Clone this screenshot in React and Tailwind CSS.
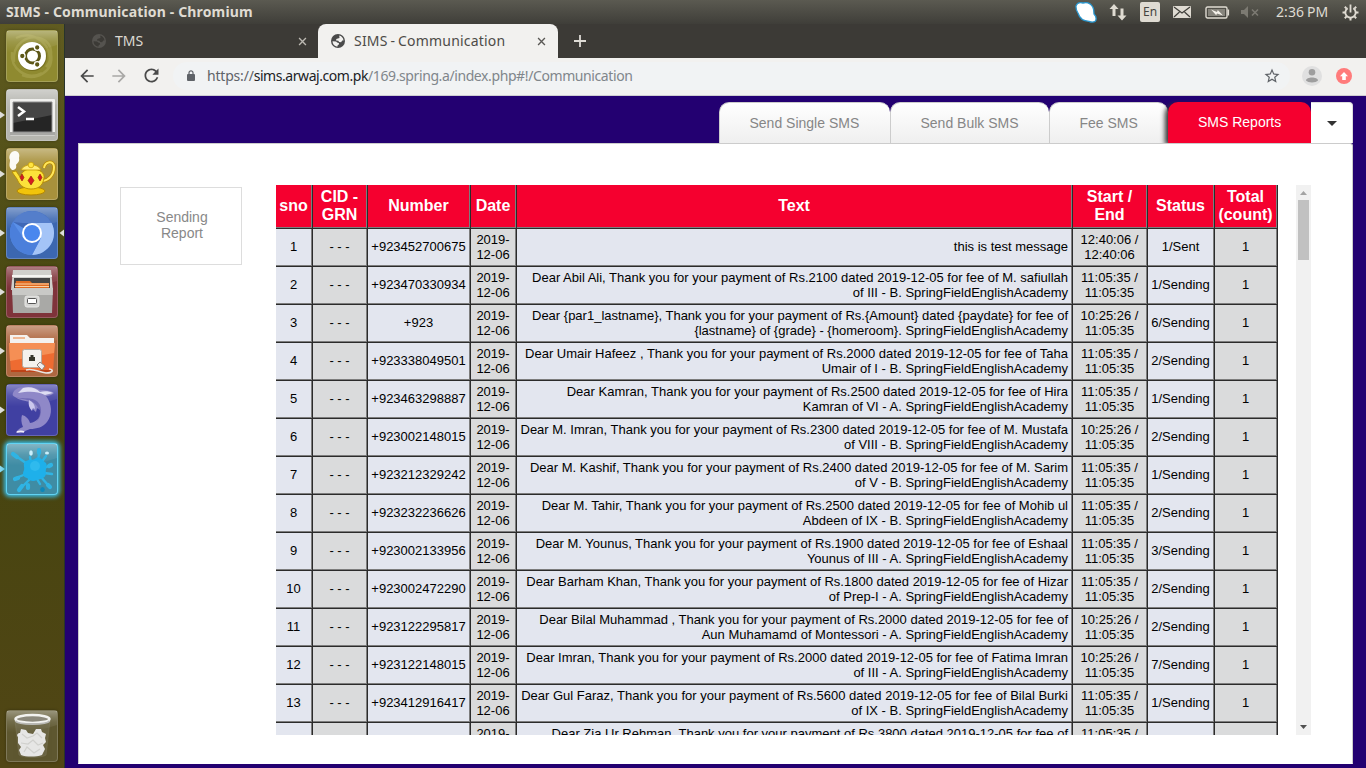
import React from "react";

const UI = "font-['Noto_Sans','Open_Sans',sans-serif]";

const rows = [
  ["1", "+923452700675", "this is test message", "", "12:40:06", "12:40:06", "1/Sent"],
  ["2", "+923470330934", "Dear Abil Ali, Thank you for your payment of Rs.2100 dated 2019-12-05 for fee of M. safiullah", "of III - B. SpringFieldEnglishAcademy", "11:05:35", "11:05:35", "1/Sending"],
  ["3", "+923", "Dear {par1_lastname}, Thank you for your payment of Rs.{Amount} dated {paydate} for fee of", "{lastname} of {grade} - {homeroom}. SpringFieldEnglishAcademy", "10:25:26", "11:05:35", "6/Sending"],
  ["4", "+923338049501", "Dear Umair Hafeez , Thank you for your payment of Rs.2000 dated 2019-12-05 for fee of Taha", "Umair of I - B. SpringFieldEnglishAcademy", "11:05:35", "11:05:35", "2/Sending"],
  ["5", "+923463298887", "Dear Kamran, Thank you for your payment of Rs.2500 dated 2019-12-05 for fee of Hira", "Kamran of VI - A. SpringFieldEnglishAcademy", "11:05:35", "11:05:35", "1/Sending"],
  ["6", "+923002148015", "Dear M. Imran, Thank you for your payment of Rs.2300 dated 2019-12-05 for fee of M. Mustafa", "of VIII - B. SpringFieldEnglishAcademy", "10:25:26", "11:05:35", "2/Sending"],
  ["7", "+923212329242", "Dear M. Kashif, Thank you for your payment of Rs.2400 dated 2019-12-05 for fee of M. Sarim", "of V - B. SpringFieldEnglishAcademy", "11:05:35", "11:05:35", "1/Sending"],
  ["8", "+923232236626", "Dear M. Tahir, Thank you for your payment of Rs.2500 dated 2019-12-05 for fee of Mohib ul", "Abdeen of IX - B. SpringFieldEnglishAcademy", "11:05:35", "11:05:35", "2/Sending"],
  ["9", "+923002133956", "Dear M. Younus, Thank you for your payment of Rs.1900 dated 2019-12-05 for fee of Eshaal", "Younus of III - A. SpringFieldEnglishAcademy", "11:05:35", "11:05:35", "3/Sending"],
  ["10", "+923002472290", "Dear Barham Khan, Thank you for your payment of Rs.1800 dated 2019-12-05 for fee of Hizar", "of Prep-I - A. SpringFieldEnglishAcademy", "11:05:35", "11:05:35", "2/Sending"],
  ["11", "+923122295817", "Dear Bilal Muhammad , Thank you for your payment of Rs.2000 dated 2019-12-05 for fee of", "Aun Muhamamd of Montessori - A. SpringFieldEnglishAcademy", "10:25:26", "11:05:35", "2/Sending"],
  ["12", "+923122148015", "Dear Imran, Thank you for your payment of Rs.2000 dated 2019-12-05 for fee of Fatima Imran", "of III - A. SpringFieldEnglishAcademy", "10:25:26", "11:05:35", "7/Sending"],
  ["13", "+923412916417", "Dear Gul Faraz, Thank you for your payment of Rs.5600 dated 2019-12-05 for fee of Bilal Burki", "of IX - B. SpringFieldEnglishAcademy", "11:05:35", "11:05:35", "1/Sending"],
];

const GRID = "grid grid-cols-[37px_55px_103px_46px_556px_75px_67px_63px]";
const CELL = "flex items-center justify-center border-r border-b border-[#2b2b2b] shadow-[inset_-1px_-1px_0_#7d7d7d] pr-px whitespace-nowrap";

function Cell({ alt, children, right, single }) {
  return (
    <div className={`${CELL} ${single ? "pb-[2px]" : "pb-px"} ${alt ? "bg-[#dadbdc]" : "bg-[#e3e6ef]"} ${right ? "justify-end! text-right pr-1!" : "text-center"}`}>
      <div>{children}</div>
    </div>
  );
}

function Head({ children }) {
  return <div className={`${CELL} bg-[#f5002f] pb-px text-center text-white`}><div>{children}</div></div>;
}

function Report() {
  return (
    <div className="h-[550px] w-[1002px] overflow-hidden text-[13px] leading-[15px] text-black">
      <div className={`${GRID} h-11 text-[16px] leading-[18px] font-bold`}>
        <Head>sno</Head>
        <Head>CID -<br />GRN</Head>
        <Head>Number</Head>
        <Head>Date</Head>
        <Head>Text</Head>
        <Head>Start /<br />End</Head>
        <Head>Status</Head>
        <Head>Total<br />(count)</Head>
      </div>
      {rows.map((r) => (
        <div key={r[0]} className={`${GRID} h-[38px]`}>
          <Cell single>{r[0]}</Cell>
          <Cell single alt>- - -</Cell>
          <Cell single>{r[1]}</Cell>
          <Cell alt>2019-<br />12-06</Cell>
          <Cell right single={!r[3]}>{r[2]}{r[3] && <br />}{r[3]}</Cell>
          <Cell alt>{r[4]} /<br />{r[5]}</Cell>
          <Cell single>{r[6]}</Cell>
          <Cell single alt>1</Cell>
        </div>
      ))}
      <div className={`${GRID} h-[38px]`}>
        <Cell />
        <Cell alt />
        <Cell />
        <Cell alt>2019-<br />&nbsp;</Cell>
        <Cell right>Dear Zia Ur Rehman, Thank you for your payment of Rs.3800 dated 2019-12-05 for fee of<br />&nbsp;</Cell>
        <Cell alt>11:05:35 /<br />&nbsp;</Cell>
        <Cell />
        <Cell alt />
      </div>
    </div>
  );
}

function Globe({ className }) {
  return (
    <svg viewBox="0 0 16 16" className={className} fill="currentColor">
      <path fillRule="evenodd" d="M8 1a7 7 0 1 0 0 14A7 7 0 0 0 8 1zM9.200 2.600c2.300.5 4.100 2.400 4.300 4.800l-1.300.1-1.100 1.700-2-.3-.8-1.200-2.200-.2.2-1.400 1.500-.7 1.700-.3zM2.500 8.200l3.600.2 1 1.200 1.700.4.3 1.300-1.400.9-.4 1.500C4.600 13.300 2.500 11 2.500 8.200z" />
    </svg>
  );
}

function Close({ className }) {
  return (
    <svg viewBox="0 0 10 10" className={className} stroke="currentColor" strokeWidth="1.5">
      <path d="M1.200 1.200l7.600 7.600M8.800 1.200L1.200 8.800" />
    </svg>
  );
}

function TopBar() {
  return (
    <div className={`flex h-6 w-full items-center bg-linear-to-b from-[#5b5a51] to-[#3f3e39] text-[#dfdbd2] ${UI}`}>
      <div className="ml-1.5 w-[1069px] shrink-0 text-[14px] leading-6 font-bold tracking-[0.15px] whitespace-nowrap">SIMS - Communication - Chromium</div>
      <svg className="h-[22px] w-[22px] shrink-0" viewBox="0 0 22 22">
        <path d="M1 5C2 2 5 1.200 8 2c4-1 8 .5 10 4.500 1 2.500.8 4.500 1 6.500 2 2 2.500 5 1.500 7-2 1.500-4.500 1.200-6.500.3C8 20 4.500 17 3.200 12.500 1.800 10.500.8 8 1 5z" fill="#fff" stroke="#2a97cf" strokeWidth="1.300" />
      </svg>
      <svg className="ml-3 h-[18px] w-[18px] shrink-0" viewBox="0 0 18 18" fill="#dfdbd2">
        <path d="M5 1l4.500 5H6.500v7h-3V6H.5zM13 17.500l-4.500-5h3V5.500h3v7h3z" />
      </svg>
      <div className="ml-[13px] flex h-5 w-5 shrink-0 items-center justify-center rounded-[2px] bg-[#dfdbd2] text-[12px] leading-5 text-[#45443f]">En</div>
      <svg className="ml-[13px] h-3 w-[18px] shrink-0" viewBox="0 0 18 12">
        <rect width="18" height="12" rx="1" fill="#dfdbd2" />
        <path d="M1 1l8 6 8-6M1 11l5.500-5M17 11l-5.500-5" fill="none" stroke="#3f3e39" strokeWidth="1.200" />
      </svg>
      <svg className="ml-3.5 h-[13px] w-[25px] shrink-0" viewBox="0 0 25 13">
        <rect x="1" y="1" width="21" height="11" rx="1.500" fill="none" stroke="#dfdbd2" strokeWidth="1.400" />
        <rect x="3" y="3" width="17" height="7" fill="#86847c" />
        <path d="M23.300 3.500v6" stroke="#dfdbd2" strokeWidth="1.600" />
        <path d="M6 3.500l6 2.500.8-2L18 9.500l-6-2-.8 1.800z" fill="#f3f0e9" />
      </svg>
      <svg className="ml-[11px] h-3 w-[18px] shrink-0" viewBox="0 0 18 12">
        <path d="M0 4h3l4-4v12L3 8H0z" fill="#7c7a72" />
        <path d="M11 3.500l6 6m0-6l-6 6" stroke="#7c7a72" strokeWidth="1.600" />
      </svg>
      <div className="ml-[17px] w-[54px] shrink-0 text-[14px] leading-6 tracking-[0.1px] whitespace-nowrap [word-spacing:-1px]">2:36 PM</div>
      <svg className="ml-3 h-[17px] w-[17px] shrink-0" viewBox="0 0 17 17" fill="none" stroke="#dfdbd2">
        <path d="M5.700 4.200a5.200 5.200 0 1 0 5.600 0" strokeWidth="1.900" />
        <path d="M8.500.5v8" strokeWidth="1.800" />
        <path d="M.5 8.500h2.500M14 8.500h2.500M8.500 14v2.500M2.800 14.200l1.800-1.800M14.200 14.200l-1.800-1.800M2.800 2.800l1.800 1.800M14.200 2.800l-1.800 1.800" strokeWidth="2" />
      </svg>
    </div>
  );
}

function UbuntuIcon() {
  return (
    <>
      <path d="M8 32C6 14 22 3 36 9c12 5 11 20 4 28M16 45c14 6 32-3 29-21M10 8c15-8 38 4 33 27M6 22c-2 17 15 29 30 21" fill="none" stroke="#dcd78e" strokeOpacity=".22" strokeWidth="2.500" />
      <circle cx="26.500" cy="26.500" r="14.500" fill="#5b5610" opacity=".5" />
      <circle cx="26" cy="26" r="14" fill="#fff" />
      <circle cx="26.500" cy="26" r="7" fill="none" stroke="#5d5717" strokeWidth="3" />
      <g stroke="#fff" strokeWidth="1.300" fill="#5d5717">
        <circle cx="16.300" cy="26" r="2.800" /><circle cx="31.200" cy="17.500" r="2.800" /><circle cx="31.200" cy="34.500" r="2.800" />
      </g>
    </>
  );
}

function TerminalIcon() {
  return (
    <>
      <rect x="4" y="10" width="45" height="37" rx="1" fill="#f0f0ee" />
      <rect x="4" y="43" width="45" height="3.500" fill="#a7a7a4" />
      <rect x="7" y="13" width="39" height="30" fill="#252525" />
      <path d="M7 13h39v13L7 34z" fill="#454545" />
      <path d="M7 13h39v30H7z" fill="none" stroke="#8e8e8e" />
      <path d="M12 18l6 4.500-6 4.500" fill="none" stroke="#fff" strokeWidth="2.500" /><path d="M20 30h8" stroke="#fff" strokeWidth="2.500" />
    </>
  );
}

function TeapotIcon() {
  return (
    <>
      <path d="M6 22C2 19 4 15 4 12 2 8 5 3 9 3c4 0 5 4 4 7 1 4-2 5-3 7 1 3-1 5-4 5z" fill="#fff" opacity=".95" />
      <path d="M38 20c1-7 10-8 10-1 0 8-5 13-11 14" fill="none" stroke="#b78900" strokeWidth="3.500" />
      <path d="M38 20c1-7 10-8 10-1 0 8-5 13-11 14" fill="none" stroke="#ffe65a" strokeWidth="2" />
      <ellipse cx="25" cy="43" rx="14" ry="4" fill="#f1c40b" stroke="#b38600" />
      <path d="M6 24l4-1 4 6c2-5 5-8 11-8 9 0 14 4 13 9-1 8-6 11-13 11-8 0-12-5-14-10z" fill="#fce13a" stroke="#b98c00" strokeWidth=".9" />
      <path d="M15 22c3-7 17-7 20 0z" fill="#ffec78" stroke="#c69b00" strokeWidth=".8" />
      <circle cx="25" cy="17" r="2.800" fill="#ffe43f" stroke="#c69b00" strokeWidth=".7" />
      <path d="M16 26l2 3.500-2 3.500-2-3.500zM25 28l3 4.500-3 4.500-3-4.500zM34 26l2 3.500-2 3.500-2-3.500z" fill="#d51b22" stroke="#8e1a0a" strokeWidth=".6" />
    </>
  );
}

function ChromiumIcon() {
  return (
    <>
      <circle cx="26" cy="26" r="22" fill="#5a90e8" />
      <path d="M26 26L7 15a22 22 0 0 1 38.100 0z" fill="#3f68b7" />
      <path d="M26 4A22 22 0 0 1 45.500 16H17l-10-1A22 22 0 0 1 26 4z" fill="#5a83cf" opacity=".8" />
      <path d="M26 16h19.600A22 22 0 0 1 26 48l9-17z" fill="#a4c4f7" />
      <path d="M6.800 15.200A22 22 0 0 0 26 48l8-15-16-1z" fill="#4b7fdb" />
      <circle cx="26" cy="26" r="10" fill="#fff" /><circle cx="26" cy="26" r="8" fill="#4a87ee" />
    </>
  );
}

function FilesIcon() {
  return (
    <>
      <path d="M7 4h38l2 20H5z" fill="#d0d0cc" />
      <path d="M6 9h40v2H6z" fill="#f5f5f2" />
      <path d="M8 12h36v10H8z" fill="#444" />
      <path d="M10 15h14l2 2h17v6H9z" fill="#e06b22" /><path d="M9 18h34M9 20.500h34" stroke="#fbd2a5" />
      <path d="M6 22h41l-1 25H7z" fill="#a9a9a6" /><path d="M6 22h41l-.3 7H6.300z" fill="#c9c9c6" />
      <rect x="19" y="30" width="14" height="11" rx="2" fill="#d6d6d4" stroke="#e8e8e6" />
      <rect x="21.500" y="32.500" width="9" height="5" rx="1" fill="#fff" stroke="#555" />
    </>
  );
}

function NetworkFolderIcon() {
  return (
    <>
      <path d="M4 10h17l3 3h24v8H4z" fill="#f4f1ee" /><path d="M7 13h12" stroke="#efb793" strokeWidth="2" />
      <path d="M3 18h46l-2 29H5z" fill="#ee6b31" /><path d="M3 18h46l-1 10L4 36z" fill="#f58f55" />
      <path d="M5 45h42v2H5z" fill="#bd4318" />
      <rect x="16.500" y="24.500" width="19" height="18" rx="2" fill="#f4f2ee" stroke="#b9a99c" />
      <path d="M23 36v-4h1.500v-2h3v2H29v4z" fill="#37372c" />
      <path d="M31 40l3-3 5 4-3 4z" fill="#eee" stroke="#8b817b" /><path d="M20 45c7-2 12 2 20 3 6 0 9-3 3-4" fill="none" stroke="#e8e4df" strokeWidth="1.600" />
    </>
  );
}

function DolphinIcon() {
  return (
    <>
      <path d="M7 9c1-3 5-6 11-6 6-1 12 1 16 3 5 0 10 0 14 3-2 2-5 3-8 3 6 8 7 18 1 26-4 5-10 7-17 7l-5 2c-1 3-6 2-9 2 0-2 4-5 7-6-2-4-2-9-1-12 4 1 7 4 8 8 7-1 11-6 10-13l-3-2-1 4c-4-3-5-6-5-10-6-1-12-2-16-5-2-1-3-2-2-4z" fill="#8f88c8" />
      <path d="M17 4c7-2 13 0 17 4 4-1 9-1 13 1l-8 2C31 7 23 7 12 9z" fill="#deddf3" />
      <path d="M9 13c8 3 17 2 22 9 3 5 3 11-1 16 7-6 7-18-1-22-6-3-14-1-20-3z" fill="#4c47a0" opacity=".45" />
      <path d="M23 16c4 2 6 5 6 9l-2-1-1 3c-3-3-4-7-3-11z" fill="#cbc7ec" />
      <path d="M11 48c3-1 5-1 7 0" fill="none" stroke="#f0eefa" strokeWidth="1.600" />
    </>
  );
}

function SplatIcon() {
  return (
    <>
      <g stroke="#2fb4e4" strokeLinecap="round" fill="none">
        <path d="M24 23L10 13M31 20l2-8M35 20l5-7M38 25l7-3M38 30l8 1M35 34l7 8M31 36l3 5M23 37L15 45M20 31L10 35M25 20l-1-6" strokeWidth="2.400" />
        <path d="M7 11l4 3M13 47l3-4M9 36l3-1M42 42l2 2M33 7v3M43 23l2-1M22 42v3" strokeWidth="4.200" />
      </g>
      <path d="M20 18c4-2 6 0 10-3 4-2 7 3 10 5 2 4-1 6 0 10 0 5-5 6-9 7-4 2-7 1-10-2-4-1-5-4-3-8 1-4-2-6 2-9z" fill="#1eb0ea" />
      <circle cx="29" cy="23" r="5" fill="#2fbaee" />
      <g fill="#c9effb"><ellipse cx="25" cy="10" rx="1.800" ry="2.800" /><ellipse cx="41" cy="10" rx="2" ry="1.500" /></g>
      <ellipse cx="36.500" cy="46.500" rx="2.300" ry="2.500" fill="#0b88bb" />
    </>
  );
}

function TrashIcon() {
  return (
    <>
      <path d="M9 10h35l-4 35c-4 3-23 3-27 0z" fill="#85816f" opacity=".3" stroke="#a8a590" strokeWidth=".7" />
      <path d="M12 27c-2-2 0-4 2-4l1-4 5 1 2 3 5 1 3-5 5 0 1 3 4 2-1 4 1 4-3 3 2 4-3 6c-6 2-16 2-21 0l-2-5 2-3-3-4z" fill="#e6e6e5" />
      <path d="M16 24l5 4 6-2 4-3 5 5M15 33l7 1 5-4 5 5 5-2M18 42l3-5 7 6 6-4" fill="none" stroke="#d0d0cd" strokeWidth="1.200" />
      <ellipse cx="26.500" cy="9" rx="17" ry="4" fill="#8c897c" stroke="#f2f2ef" strokeWidth="2.500" />
      <path d="M9.500 11c3 4 31 4 34 0" fill="none" stroke="#b9b9b5" strokeWidth="2" />
    </>
  );
}

const apps = [
  { bg: "bg-[#8f8a30]", Icon: UbuntuIcon },
  { bg: "bg-[#b5b5af]", Icon: TerminalIcon, run: true },
  { bg: "bg-[#a8913c]", Icon: TeapotIcon, run: true },
  { bg: "bg-[#3c67b0]", Icon: ChromiumIcon, run: true, focus: true },
  { bg: "bg-[#7f333a]", Icon: FilesIcon, run: true },
  { bg: "bg-[#ae6740]", Icon: NetworkFolderIcon, run: true },
  { bg: "bg-[#4040a2]", Icon: DolphinIcon, run: true },
  { bg: "bg-[#3f8ca4]", Icon: SplatIcon, run: true, glow: true },
];

function Tile({ bg, Icon, glow }) {
  return (
    <div className={`h-[52px] w-[52px] shrink-0 overflow-hidden rounded-[4px] ${bg} ${glow ? "shadow-[0_0_4px_2px_#39bde8,inset_0_0_0_1px_#62d3f2]" : "shadow-[inset_0_0_0_1px_rgba(255,255,255,0.2),0_0_3px_rgba(0,0,0,0.3)]"}`}>
      <svg viewBox="0 0 52 52" className="block h-[52px] w-[52px]">
        <defs>
          <linearGradient id="gloss" x1="0" y1="0" x2="0" y2="1">
            <stop offset="0" stopColor="#fff" stopOpacity=".36" />
            <stop offset=".5" stopColor="#fff" stopOpacity=".12" />
            <stop offset="1" stopColor="#fff" stopOpacity="0" />
          </linearGradient>
        </defs>
        <path d="M1 1h50v14Q26 24 1 22z" fill="url(#gloss)" />
        <Icon />
      </svg>
    </div>
  );
}

function Launcher() {
  return (
    <div className="flex h-[744px] w-[65px] shrink-0 flex-col border-r border-[#28342c] bg-linear-to-b from-[#605b20] via-[#44440e] via-45% to-[#514615] pt-1.5 pb-1.5">
      <div className="flex flex-col gap-[7px]">
        {apps.map((a, i) => (
          <div key={i} className="flex items-center">
            <svg className="h-2 w-[6px] shrink-0" viewBox="0 0 6 8">{a.run && <path d="M0 .5L5 4 0 7.500z" fill={a.glow ? "#8bd9ee" : "#dededa"} />}</svg>
            <Tile {...a} />
            <svg className="h-2 w-[6px] shrink-0" viewBox="0 0 6 8">{a.focus && <path d="M6 .5L1.500 4 6 7.500z" fill="#dededa" />}</svg>
          </div>
        ))}
      </div>
      <div className="mt-auto ml-1.5"><Tile bg="bg-[#5e5730]" Icon={TrashIcon} /></div>
    </div>
  );
}

function Browser() {
  return (
    <div className={UI}>
      <div className="flex h-[34px] items-center bg-[#3c3a36]">
        <div className="flex h-[34px] w-[253px] items-center pl-[26px] text-[#dcd9d2]">
          <Globe className="h-4 w-4 text-[#55534f]" />
          <div className="ml-2 w-[183px] text-[14px] leading-5">TMS</div>
          <Close className="h-[9px] w-[9px] text-[#bcb9b2]" />
        </div>
        <div className="flex h-[34px] w-60 items-center rounded-t-[8px] bg-[#f2f1ef] pl-3 text-[#4d4b48]">
          <Globe className="h-4 w-4 text-[#4a4a4a]" />
          <div className="ml-2 w-[183px] text-[14px] leading-5 tracking-[0.2px] whitespace-nowrap [word-spacing:-1px]">SIMS - Communication</div>
          <Close className="h-[9px] w-[9px] text-[#5a5855]" />
        </div>
        <svg className="ml-4 h-3 w-3" viewBox="0 0 12 12"><path d="M6 0v12M0 6h12" stroke="#dedbd5" strokeWidth="1.800" /></svg>
      </div>
      <div className="flex h-[38px] items-center border-b border-[#cfcdd0] bg-[#f2f1ef] pb-0.5 text-[#4a4a4a]">
        <svg className="ml-3 h-5 w-5 shrink-0" viewBox="0 0 24 24" fill="currentColor"><path d="M20 11H7.830l5.590-5.590L12 4l-8 8 8 8 1.410-1.410L7.830 13H20v-2z" /></svg>
        <svg className="ml-3 h-5 w-5 shrink-0 text-[#a9a8a6]" viewBox="0 0 24 24" fill="currentColor"><path d="M12 4l-1.410 1.410L16.170 11H4v2h12.170l-5.580 5.590L12 20l8-8z" /></svg>
        <svg className="ml-3 h-[21px] w-[21px] shrink-0" viewBox="0 0 24 24" fill="currentColor"><path d="M17.650 6.350C16.200 4.900 14.210 4 12 4c-4.420 0-7.990 3.580-7.990 8s3.570 8 7.990 8c3.730 0 6.840-2.550 7.730-6h-2.080c-.82 2.330-3.040 4-5.650 4-3.310 0-6-2.690-6-6s2.690-6 6-6c1.660 0 3.140.69 4.220 1.780L13 11h7V4l-2.350 2.350z" /></svg>
        <div className="ml-[11px] flex h-7 w-[1117px] shrink-0 items-center rounded-full bg-[#f1f3f4] pl-3.5">
          <svg className="h-[11px] w-2 shrink-0" viewBox="0 0 8 11"><rect y="4" width="8" height="7" rx="1" fill="#5f6368" /><path d="M2 4.500V2.800a2 2 0 0 1 4 0v1.700" fill="none" stroke="#5f6368" strokeWidth="1.200" /></svg>
          <div className="ml-3 w-[1056px] shrink-0 text-[14px] leading-5 tracking-[-0.4px] whitespace-nowrap text-[#80868b]"><span className="tracking-[-0.2px] text-[#5f6368]">https://</span><span className="tracking-[-0.44px] text-[#202124]">sims.arwaj.com.pk</span>/169.spring.a/index.php#!/Communication</div>
          <svg className="h-[18px] w-[18px] shrink-0" viewBox="0 0 24 24" fill="#5f6368"><path d="M22 9.240l-7.190-.62L12 2 9.190 8.630 2 9.240l5.460 4.730L5.820 21 12 17.270 18.180 21l-1.630-7.030L22 9.240zM12 15.400l-3.760 2.270 1-4.280-3.320-2.880 4.380-.38L12 6.100l1.710 4.040 4.380.38-3.320 2.880 1 4.280L12 15.400z" /></svg>
        </div>
        <svg className="ml-3 h-5 w-5 shrink-0" viewBox="0 0 20 20"><circle cx="10" cy="10" r="10" fill="#e0e0e0" /><circle cx="10" cy="6.300" r="3.300" fill="#9e9e9e" /><path d="M4 14.500c0-4 12-4 12 0-2 2.500-10 2.500-12 0z" fill="#9e9e9e" /></svg>
        <svg className="ml-3.5 h-4 w-4 shrink-0" viewBox="0 0 16 16"><circle cx="8" cy="8" r="8" fill="#ff7b7b" /><path d="M8 4l4 4.300H9.800V12H6.200V8.300H4z" fill="#fff" /></svg>
      </div>
    </div>
  );
}

function Page() {
  const tab = "h-[41px] border-t border-l border-[#ccc] bg-linear-to-b from-white to-[#efefef] pl-[29.5px] text-[14px] leading-[41px] text-[#868686] whitespace-nowrap";
  return (
    <div className="flex h-[672px] flex-col bg-[#230071] pt-1.5 pl-[13px] font-['Liberation_Sans',Arial,sans-serif]">
      <div className="flex w-[1275px] justify-end">
        <div className={`${tab} w-[171px] rounded-t-[10px]`}>Send Single SMS</div>
        <div className={`${tab} w-[159px] rounded-t-[10px]`}>Send Bulk SMS</div>
        <div className={`${tab} w-[119px] rounded-t-[10px]`}>Fee SMS</div>
        <div className="relative h-[41px] w-[143px] rounded-t-[10px] bg-[#f5002f] pl-[30px] text-[14px] leading-[41px] text-white shadow-[-3px_2px_5px_#333]">SMS Reports</div>
        <div className="relative flex h-[41px] w-[42px] items-center justify-center rounded-tr-[4px] border-t border-r border-[#ddd] bg-white">
          <svg className="h-[5px] w-[10px]" viewBox="0 0 10 5"><path d="M0 0h10L5 5z" fill="#333" /></svg>
        </div>
      </div>
      <div className="relative flex h-[621px] w-[1275px] rounded-tr-[3px] border border-[#ccc] border-b-white bg-white">
        <div className="mt-[43px] ml-[41px] flex h-[78px] w-[122px] shrink-0 items-center justify-center border border-[#ddd] pb-0.5 pl-0.5 text-center text-[14px] leading-4 text-[#888]">
          <div>Sending<br />Report</div>
        </div>
        <div className="mt-[41px] ml-[34px] flex shrink-0">
          <Report />
          <div className="ml-[18px] flex h-[550px] w-[15px] flex-col items-center bg-[#f1f1f1]">
            <svg className="mt-1.5 h-1 w-[7px]" viewBox="0 0 7 4"><path d="M0 4h7L3.500 0z" fill="#a3a3a3" /></svg>
            <div className="mt-[5px] h-[60px] w-[11px] bg-[#c1c1c1]" />
            <svg className="mt-auto mb-1.5 h-1 w-[7px]" viewBox="0 0 7 4"><path d="M0 0h7L3.500 4z" fill="#505050" /></svg>
          </div>
        </div>
      </div>
    </div>
  );
}

export default function App() {
  return (
    <div className="flex h-[768px] w-[1366px] flex-col overflow-hidden">
      <TopBar />
      <div className="flex">
        <Launcher />
        <div className="w-[1301px]">
          <Browser />
          <Page />
        </div>
      </div>
    </div>
  );
}
